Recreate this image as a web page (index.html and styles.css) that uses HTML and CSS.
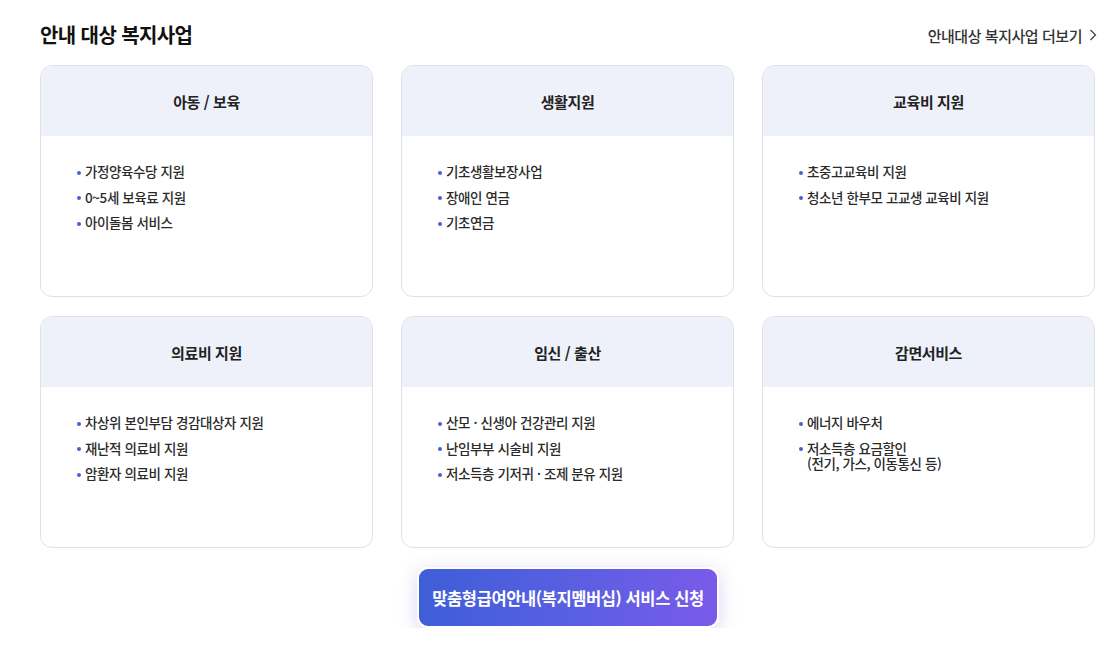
FILE: index.html
```html
<!DOCTYPE html>
<html lang="ko">
<head>
<meta charset="utf-8">
<title>안내 대상 복지사업</title>
<link rel="stylesheet" href="styles.css">
</head>
<body>
<div class="page">
  <div class="head">
    <h2 class="title">안내 대상 복지사업</h2>
    <a class="more" href="#">안내대상 복지사업 더보기
      <svg class="chev" width="8" height="12" viewBox="0 0 8 12"><path d="M1.5 1 L6.5 6 L1.5 11" fill="none" stroke="#444" stroke-width="1.3"/></svg>
    </a>
  </div>
  <div class="grid">
    <div class="card">
      <div class="card-h">아동 / 보육</div>
      <ul class="list">
        <li>가정양육수당 지원</li>
        <li>0~5세 보육료 지원</li>
        <li>아이돌봄 서비스</li>
      </ul>
    </div>
    <div class="card">
      <div class="card-h">생활지원</div>
      <ul class="list">
        <li>기초생활보장사업</li>
        <li>장애인 연금</li>
        <li>기초연금</li>
      </ul>
    </div>
    <div class="card">
      <div class="card-h">교육비 지원</div>
      <ul class="list">
        <li>초중고교육비 지원</li>
        <li>청소년 한부모 고교생 교육비 지원</li>
      </ul>
    </div>
    <div class="card">
      <div class="card-h">의료비 지원</div>
      <ul class="list">
        <li>차상위 본인부담 경감대상자 지원</li>
        <li>재난적 의료비 지원</li>
        <li>암환자 의료비 지원</li>
      </ul>
    </div>
    <div class="card">
      <div class="card-h">임신 / 출산</div>
      <ul class="list">
        <li>산모 · 신생아 건강관리 지원</li>
        <li>난임부부 시술비 지원</li>
        <li>저소득층 기저귀 · 조제 분유 지원</li>
      </ul>
    </div>
    <div class="card">
      <div class="card-h">감면서비스</div>
      <ul class="list">
        <li>에너지 바우처</li>
        <li>저소득층 요금할인<br>(전기, 가스, 이동통신 등)</li>
      </ul>
    </div>
  </div>
  <div class="cta-wrap">
    <a class="cta" href="#">맞춤형급여안내(복지멤버십) 서비스 신청</a>
  </div>
</div>
</body>
</html>
```

FILE: styles.css
```css
* { box-sizing: border-box; }
html, body { margin: 0; padding: 0; background: #fff; }
body {
  font-family: "Noto Sans CJK KR", "Noto Sans", sans-serif;
  color: #222;
}
.page {
  width: 1109px;
  height: 628px;
  overflow: hidden;
  padding: 21px 13px 0 40px;
}
.head {
  display: flex;
  justify-content: space-between;
  align-items: center;
  height: 28px;
}
.title {
  margin: 0;
  font-size: 20px;
  font-weight: 700;
  letter-spacing: -0.6px;
  color: #111;
  line-height: 28px;
}
.more {
  display: flex;
  align-items: center;
  gap: 7px;
  font-size: 15px;
  font-weight: 500;
  letter-spacing: -0.45px;
  color: #333;
  text-decoration: none;
  margin-right: -1px;
}
.grid {
  margin-top: 16px;
  display: grid;
  grid-template-columns: repeat(3, 333px);
  column-gap: 28px;
  row-gap: 19px;
}
.card {
  height: 232px;
  border: 1px solid #dfe1e8;
  border-radius: 12px;
  overflow: hidden;
  background: #fff;
}
.card-h {
  height: 70px;
  background: #eef1fa;
  display: flex;
  align-items: center;
  justify-content: center;
  font-size: 15px;
  font-weight: 700;
  letter-spacing: -0.4px;
  color: #222;
}
.list {
  list-style: none;
  margin: 0;
  padding: 28px 10px 0 44px;
}
.list li {
  position: relative;
  font-size: 13.5px;
  font-weight: 500;
  letter-spacing: -0.4px;
  line-height: 15px;
  color: #2a2a2a;
  margin-bottom: 10.5px;
}
.list li::before {
  content: "";
  position: absolute;
  left: -8px;
  top: 6.5px;
  width: 4px;
  height: 4px;
  border-radius: 50%;
  background: #4a5fd4;
}
.cta-wrap {
  display: flex;
  justify-content: center;
  margin-top: 19px;
}
.cta {
  display: flex;
  align-items: center;
  justify-content: center;
  width: 302px;
  height: 61px;
  border: 2px solid #fff;
  border-radius: 11px;
  background: linear-gradient(90deg, #3e5ed8 0%, #5b5fe2 55%, #7a5ae9 100%);
  box-shadow: 0 4px 18px rgba(110, 100, 220, 0.28);
  color: #fff;
  font-size: 16.5px;
  font-weight: 700;
  letter-spacing: -0.4px;
  text-decoration: none;
}
```
